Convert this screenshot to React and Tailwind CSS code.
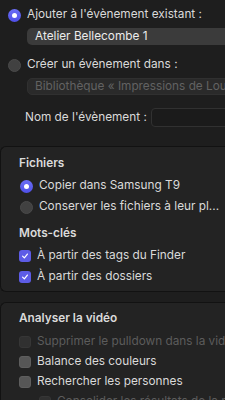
const Radio = ({ checked }) => (
  checked ? (
    <span className="flex-shrink-0 w-[13px] h-[13px] rounded-full bg-gradient-to-b from-[#6b6ef5] to-[#4f4fe8] flex items-center justify-center">
      <span className="w-[5px] h-[5px] rounded-full bg-white" />
    </span>
  ) : (
    <span className="flex-shrink-0 w-[13px] h-[13px] rounded-full bg-[#414141] border border-[#4a4a4a]" />
  )
);

const Check = ({ checked, disabled }) => {
  if (checked) {
    return (
      <span className="flex-shrink-0 w-[12px] h-[12px] rounded-[3px] bg-[#5d5ce6] flex items-center justify-center">
        <svg width="8" height="8" viewBox="0 0 10 10" fill="none">
          <path d="M2 5.2 L4.2 7.4 L8 2.6" stroke="white" strokeWidth="1.5" strokeLinecap="round" strokeLinejoin="round" />
        </svg>
      </span>
    );
  }
  return (
    <span
      className={`flex-shrink-0 w-[12px] h-[12px] rounded-[3px] ${
        disabled ? 'bg-[#303030] border border-[#363636]' : 'bg-[#565656] border border-[#5e5e5e]'
      }`}
    />
  );
};

const Box = ({ className, children }) => (
  <div className={`rounded-l-[6px] border border-r-0 border-[#121212] bg-[#232323] ${className}`}>
    {children}
  </div>
);

const App = () => {
  return (
    <div className="w-[225px] h-[400px] overflow-hidden bg-[#1e1e1e] text-[11.8px] leading-none text-[#dadada] font-['Inter',sans-serif] whitespace-nowrap">
      <div className="pt-[5px]">
        <div className="flex items-center h-[20px] pl-[8px] gap-[6px]">
          <Radio checked />
          <span>Ajouter à l'évènement existant :</span>
        </div>
        <div className="ml-[27px] mt-[3px] h-[17px] w-[220px] rounded-[5px] bg-[#3b3b3b] pl-[8px] flex items-center text-[#ececec]">
          Atelier Bellecombe 1
        </div>

        <div className="flex items-center h-[20px] pl-[8px] gap-[6px] mt-[10px]">
          <Radio />
          <span>Créer un évènement dans :</span>
        </div>
        <div className="ml-[27px] mt-[3px] h-[17px] w-[220px] rounded-[5px] bg-[#2a2a2a] border border-[#303030] pl-[7px] flex items-center text-[#626262] overflow-hidden">
          Bibliothèque « Impressions de Louis »
        </div>

        <div className="flex items-center h-[19px] mt-[13px]">
          <span className="pl-[25px] w-[151px] flex-shrink-0">Nom de l'évènement :</span>
          <div className="h-[19px] w-[100px] flex-shrink-0 rounded-[4px] bg-[#1b1b1b] border border-[#313131]" />
        </div>
      </div>

      <Box className="mt-[19px] h-[146px] pt-[8px]">
        <div className="h-[18px] flex items-center pl-[18px] font-semibold">Fichiers</div>
        <div className="flex items-center h-[20px] pl-[19px] gap-[6px] mt-[3px]">
          <Radio checked />
          <span>Copier dans Samsung T9</span>
        </div>
        <div className="flex items-center h-[20px] pl-[19px] gap-[6px] mt-[1px]">
          <Radio />
          <span>Conserver les fichiers à leur pl...</span>
        </div>
        <div className="h-[18px] flex items-center pl-[18px] font-semibold mt-[8px]">Mots-clés</div>
        <div className="flex items-center h-[20px] pl-[18px] gap-[6px] mt-[3px]">
          <Check checked />
          <span>À partir des tags du Finder</span>
        </div>
        <div className="flex items-center h-[20px] pl-[18px] gap-[6px] mt-[1px]">
          <Check checked />
          <span>À partir des dossiers</span>
        </div>
      </Box>

      <Box className="mt-[10px] h-[120px] pt-[7px]">
        <div className="h-[18px] flex items-center pl-[18px] font-semibold">Analyser la vidéo</div>
        <div className="flex items-center h-[20px] pl-[18px] gap-[6px] mt-[4px] text-[#5c5c5c]">
          <Check disabled />
          <span>Supprimer le pulldown dans la vidéo</span>
        </div>
        <div className="flex items-center h-[20px] pl-[18px] gap-[6px]">
          <Check />
          <span>Balance des couleurs</span>
        </div>
        <div className="flex items-center h-[20px] pl-[18px] gap-[6px]">
          <Check />
          <span>Rechercher les personnes</span>
        </div>
        <div className="flex items-center h-[20px] pl-[38px] gap-[6px] text-[#5c5c5c]">
          <Check disabled />
          <span>Consolider les résultats de la recherche</span>
        </div>
      </Box>
    </div>
  );
};

export default App;
